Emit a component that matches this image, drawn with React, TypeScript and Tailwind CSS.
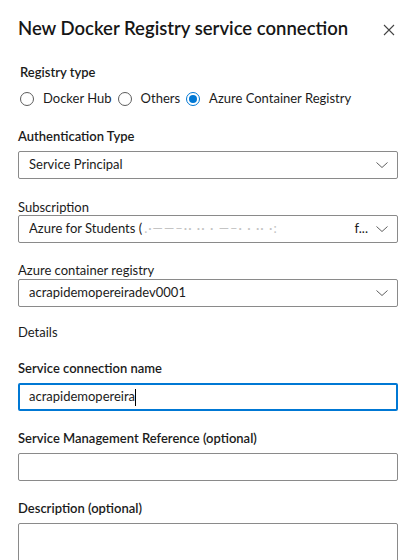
import type { FC } from 'react';

const font = { fontFamily: '"Segoe UI", Lato, sans-serif' };

const Chevron: FC = () => (
    <svg width="12" height="8" viewBox="0 0 12 8" className="shrink-0 mr-[1px]">
        <path d="M0.5 1.5 L6 6.5 L11.5 1.5" fill="none" stroke="#5f5f5f" strokeWidth="1" />
    </svg>
);

const Radio: FC<{ checked?: boolean; label: string }> = ({ checked, label }) => (
    <label className="flex items-center whitespace-nowrap">
        {checked ? (
            <span className="w-[14px] h-[14px] rounded-full border border-[#0078d4] flex items-center justify-center">
                <span className="w-[8px] h-[8px] rounded-full bg-[#0078d4]" />
            </span>
        ) : (
            <span className="w-[14px] h-[14px] rounded-full border border-[#5c5c5c]" />
        )}
        <span className="ml-[9px] mr-[6px]">{label}</span>
    </label>
);

const Select: FC<{ children: React.ReactNode; className?: string }> = ({ children, className }) => (
    <div className={`h-[28px] border border-[#8a8a8a] rounded-[2px] flex items-center pl-[10px] pr-[8px] ${className ?? ''}`}>
        <div className="flex-1 truncate flex items-center whitespace-nowrap">{children}</div>
        <Chevron />
    </div>
);

export default function App() {
    return (
        <div className="w-[416px] h-[560px] bg-white overflow-hidden text-[13px] text-[#1b1b1b] px-[18px]" style={font}>
            {/* header */}
            <div className="flex items-center justify-between pt-[14px] h-[42px]">
                <h1 className="text-[18.5px] leading-[28px] font-semibold text-[#161616] whitespace-nowrap">New Docker Registry service connection</h1>
                <svg width="12" height="12" viewBox="0 0 12 12" className="mr-[3px] mt-[4px]">
                    <path d="M1 1 L11 11 M11 1 L1 11" stroke="#444" strokeWidth="1.1" />
                </svg>
            </div>

            {/* registry type */}
            <div className="mt-[20px] leading-[20px] font-semibold pl-[2px]">Registry type</div>
            <div className="flex items-center mt-[7px] h-[20px] pl-[2px]">
                <Radio label="Docker Hub" />
                <Radio label="Others" />
                <Radio checked label="Azure Container Registry" />
            </div>

            <div className="mt-[17px] leading-[20px] font-semibold">Authentication Type</div>
            <Select className="mt-[5px]">Service Principal</Select>

            <div className="mt-[20px] leading-[16px]">Subscription</div>
            <Select>
                <span>Azure for Students (</span>
                <span className="text-[#c4c4c4] tracking-[1px] ml-[2px]">.·——–·· ·· ·  —–·   ·  ·· ·:</span>
                <span className="ml-auto mr-[8px]">f...</span>
            </Select>

            <div className="mt-[19px] leading-[16px]">Azure container registry</div>
            <Select className="mt-[1px]">acrapidemopereiradev0001</Select>

            <div className="mt-[15px] leading-[20px]">Details</div>

            <div className="mt-[16px] leading-[20px] font-semibold">Service connection name</div>
            <div className="mt-[5px] h-[28px] border-2 border-[#0078d4] rounded-[2px] flex items-center pl-[9px]">
                <span>acrapidemopereira</span>
                <span className="w-[1px] h-[17px] bg-black" />
            </div>

            <div className="mt-[17px] leading-[20px] font-semibold">Service Management Reference (optional)</div>
            <div className="mt-[5px] h-[28px] border border-[#8a8a8a] rounded-[2px]" />

            <div className="mt-[17px] leading-[20px] font-semibold">Description (optional)</div>
            <div className="mt-[5px] h-[80px] border border-[#8a8a8a] rounded-[2px]" />
        </div>
    );
}
